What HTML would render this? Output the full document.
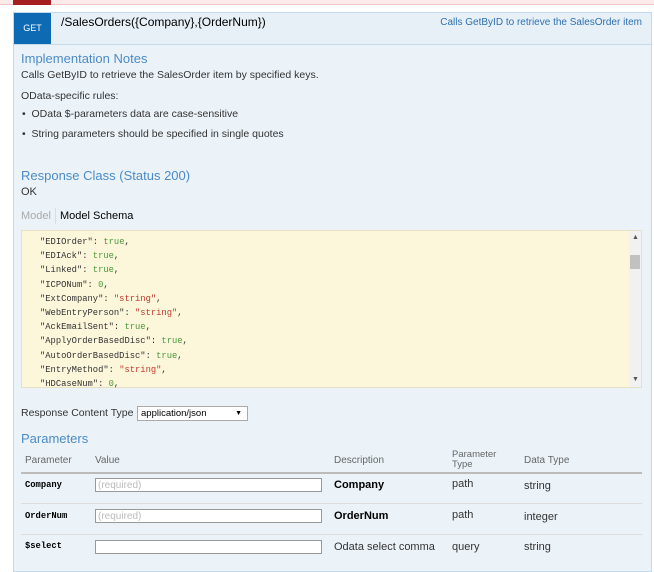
<!DOCTYPE html>
<html><head><meta charset="utf-8"><style>
*{margin:0;padding:0;box-sizing:border-box}
body{width:654px;height:545px;overflow:hidden;background:#fff;font-family:"Liberation Sans",sans-serif;font-size:11px;color:#333;position:relative}
.a{position:absolute;white-space:nowrap}
.blue{color:#4b8bc7}
.code{font-family:"Liberation Mono",monospace;font-size:8.8px;color:#333}
.g{color:#4b9a3c}.s{color:#c0392b}
input{position:absolute;height:14px;border:1px solid #999;background:#fff;font-family:"Liberation Sans",sans-serif;font-size:10px;color:#bbb;padding-left:2px}
.hr{position:absolute;left:21px;width:621px;height:1px;background:#ddd}
</style></head><body>
<div class="a" style="left:0;top:0;width:654px;height:5px;background:#fbeaea;border-bottom:1px solid #f2c4c4"></div>
<div class="a" style="left:13px;top:0;width:38px;height:5px;background:#a41e22"></div>
<div class="a" style="left:13px;top:12px;width:639px;height:560px;background:#ebf3f9;border:1px solid #c3d9ec"></div>
<div class="a" style="left:13px;top:12px;width:639px;height:33px;background:#e7f0f7;border:1px solid #c3d9ec"></div>
<div class="a" style="left:14px;top:13px;width:37px;height:31px;background:#0f6ab4;color:#fff;font-size:9px;text-align:center;line-height:31px">GET</div>
<div class="a" style="left:61px;top:15px;font-size:12px;color:#000">/SalesOrders({Company},{OrderNum})</div>
<div class="a blue" style="right:12px;top:17px;font-size:10px;color:#2d6fb0">Calls GetByID to retrieve the SalesOrder item</div>
<div class="a blue" style="left:21px;top:51px;font-size:13px">Implementation Notes</div>
<div class="a" style="left:21px;top:69px;font-size:10.5px">Calls GetByID to retrieve the SalesOrder item by specified keys.</div>
<div class="a" style="left:21px;top:90px;font-size:10.5px">OData-specific rules:</div>
<div class="a" style="left:22px;top:108px;font-size:10.5px">•&nbsp; OData $-parameters data are case-sensitive</div>
<div class="a" style="left:22px;top:128px;font-size:10.5px">•&nbsp; String parameters should be specified in single quotes</div>
<div class="a blue" style="left:21px;top:168px;font-size:13px">Response Class (Status 200)</div>
<div class="a" style="left:21px;top:186px">OK</div>
<div class="a" style="left:21px;top:210px;color:#aaa">Model</div>
<div class="a" style="left:55px;top:208px;width:1px;height:16px;background:#ddd"></div>
<div class="a" style="left:60px;top:210px;color:#000">Model Schema</div>
<div class="a" style="left:21px;top:230px;width:621px;height:158px;background:#fcf6db;border:1px solid #e5e0c6"></div>
<div class="a" style="left:629px;top:231px;width:12px;height:156px;background:#f1f1f1"></div>
<div class="a" style="left:630px;top:255px;width:10px;height:14px;background:#c1c1c1"></div>
<div class="a" style="left:632px;top:234px;font-size:7px;color:#555">▲</div>
<div class="a" style="left:632px;top:376px;font-size:7px;color:#555">▼</div>
<div class="a code" style="left:40px;top:235px;line-height:14.2px">"EDIOrder": <span class="g">true</span>,<br>"EDIAck": <span class="g">true</span>,<br>"Linked": <span class="g">true</span>,<br>"ICPONum": <span class="g">0</span>,<br>"ExtCompany": <span class="s">"string"</span>,<br>"WebEntryPerson": <span class="s">"string"</span>,<br>"AckEmailSent": <span class="g">true</span>,<br>"ApplyOrderBasedDisc": <span class="g">true</span>,<br>"AutoOrderBasedDisc": <span class="g">true</span>,<br>"EntryMethod": <span class="s">"string"</span>,<br>"HDCaseNum": <span class="g">0</span>,</div>
<div class="a" style="left:21px;top:407px;font-size:10.5px">Response Content Type</div>
<div class="a" style="left:137px;top:406px;width:111px;height:15px;border:1px solid #aaa;background:#fff;font-size:9.5px;line-height:13px;padding-left:3px;color:#000">application/json<span style="position:absolute;right:5px;font-size:7px">▼</span></div>
<div class="a blue" style="left:21px;top:431px;font-size:13px">Parameters</div>
<div class="a" style="left:25px;top:455px;color:#666;font-size:10px">Parameter</div>
<div class="a" style="left:95px;top:455px;color:#666;font-size:10px">Value</div>
<div class="a" style="left:334px;top:455px;color:#666;font-size:10px">Description</div>
<div class="a" style="left:452px;top:450px;color:#666;font-size:9.5px;line-height:10px">Parameter<br>Type</div>
<div class="a" style="left:524px;top:455px;color:#666;font-size:10px">Data Type</div>
<div class="a" style="left:21px;top:472px;width:621px;height:2px;background:#bbb"></div>
<div class="a code" style="left:25px;top:480px;font-weight:bold;color:#000">Company</div>
<input style="left:95px;top:478px;width:227px" value="(required)">
<div class="a" style="left:334px;top:479px;font-weight:bold;color:#000">Company</div>
<div class="a" style="left:452px;top:478px">path</div>
<div class="a" style="left:524px;top:480px">string</div>
<div class="hr" style="top:503px"></div>
<div class="a code" style="left:25px;top:511px;font-weight:bold;color:#000">OrderNum</div>
<input style="left:95px;top:509px;width:227px" value="(required)">
<div class="a" style="left:334px;top:510px;font-weight:bold;color:#000">OrderNum</div>
<div class="a" style="left:452px;top:509px">path</div>
<div class="a" style="left:524px;top:511px">integer</div>
<div class="hr" style="top:534px"></div>
<div class="a code" style="left:25px;top:541px;font-weight:bold;color:#000">$select</div>
<input style="left:95px;top:540px;width:227px" value="">
<div class="a" style="left:334px;top:541px">Odata select comma</div>
<div class="a" style="left:452px;top:541px">query</div>
<div class="a" style="left:524px;top:541px">string</div>
</body></html>
